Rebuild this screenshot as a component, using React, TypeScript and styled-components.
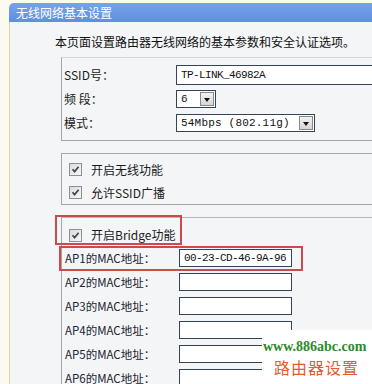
import styled, { createGlobalStyle } from 'styled-components';

const GlobalStyle = createGlobalStyle`
  html, body {
    margin: 0;
    padding: 0;
  }
  body {
    width: 372px;
    height: 384px;
    overflow: hidden;
    background: #fcfaee;
    font-family: "Noto Sans CJK SC", "Liberation Sans", sans-serif;
    font-size: 12px;
    color: #1b1b1b;
  }
`;

const ssidRows = [
  { label: 'SSID号：', kind: 'input', value: 'TP-LINK_46982A' },
  { label: '频 段：', kind: 'select', value: '6', width: 40 },
  { label: '模式：', kind: 'select', value: '54Mbps (802.11g)', width: 139 },
];

const apRows = [
  { label: 'AP1的MAC地址：', value: '00-23-CD-46-9A-96' },
  { label: 'AP2的MAC地址：', value: '' },
  { label: 'AP3的MAC地址：', value: '' },
  { label: 'AP4的MAC地址：', value: '' },
  { label: 'AP5的MAC地址：', value: '' },
  { label: 'AP6的MAC地址：', value: '' },
];

const Check = () => (
  <CheckBox>
    <svg width="11" height="11" viewBox="0 0 11 11">
      <path d="M2.5 5.2 L4.6 7.6 L8.6 2.8" fill="none" stroke="#3b4660" strokeWidth="1.7" />
    </svg>
  </CheckBox>
);

export default function App() {
  return (
    <Page>
      <GlobalStyle />
      <Header>无线网络基本设置</Header>
      <Body>
        <Intro>本页面设置路由器无线网络的基本参数和安全认证选项。</Intro>
        <Sections>
          <FormBox>
            {ssidRows.map((r) => (
              <FormRow key={r.label}>
                <Label>{r.label}</Label>
                {r.kind === 'input' ? (
                  <TextInput $width={220} $height={20}>{r.value}</TextInput>
                ) : (
                  <SelectBox $width={r.width || 40}>
                    <SelectText>{r.value}</SelectText>
                    <DropButton />
                  </SelectBox>
                )}
              </FormRow>
            ))}
          </FormBox>

          <CheckGroup>
            <CheckRow>
              <Check />
              <span>开启无线功能</span>
            </CheckRow>
            <CheckRow>
              <Check />
              <span>允许SSID广播</span>
            </CheckRow>
          </CheckGroup>

          <BridgeBox>
            <BridgeRow>
              <Check />
              <span>开启Bridge功能</span>
            </BridgeRow>
            {apRows.map((r) => (
              <ApRow key={r.label}>
                <ApLabel>{r.label}</ApLabel>
                <TextInput $width={113} $height={18}>{r.value}</TextInput>
              </ApRow>
            ))}
            <Mark $left={-7} $top={-3} $w={127} $h={30} />
            <Mark $left={-3} $top={28} $w={244} $h={25} />
          </BridgeBox>
        </Sections>
      </Body>
      <Stamp>
        <StampUrl>www.886abc.com</StampUrl>
        <StampName>路由器设置</StampName>
      </Stamp>
    </Page>
  );
}

const Page = styled.div`
  position: relative;
  box-sizing: border-box;
  height: 384px;
  padding: 3px 0 0 9px;
  display: flex;
  flex-direction: column;
  overflow: hidden;
`;

const Header = styled.div`
  height: 19px;
  line-height: 19px;
  padding-left: 7px;
  color: #ffffff;
  font-size: 12px;
  background: linear-gradient(#77a2ea, #5f8fe2);
  border-top-left-radius: 5px;
`;

const Body = styled.div`
  flex: 1;
  display: flex;
  flex-direction: column;
  background: #f3f5f7;
  border-left: 1px solid #ddd3ac;
`;

const Intro = styled.div`
  padding: 12px 0 0 45px;
  line-height: 16px;
  height: 16px;
  white-space: nowrap;
  color: #111;
`;

const Sections = styled.div`
  flex: 1;
  display: flex;
  flex-direction: column;
  gap: 12px;
  padding: 7px 0 0 51px;
`;

const FormBox = styled.div`
  border-top: 1px solid #d6d6d6;
  border-left: 1px solid #a6a6a6;
  border-bottom: 1px solid #a6a6a6;
  padding: 5px 0 5px 2px;
`;

const FormRow = styled.div`
  display: grid;
  grid-template-columns: 112px 1fr;
  align-items: center;
  height: 24px;
  white-space: nowrap;
`;

const Label = styled.span`
  line-height: 16px;
`;

const TextInput = styled.div<{ $width: number; $height: number }>`
  box-sizing: border-box;
  width: ${(p) => p.$width}px;
  height: ${(p) => p.$height}px;
  padding-left: 4px;
  border: 1px solid #33445a;
  background: #ffffff;
  font-family: "Liberation Mono", monospace;
  font-size: 11px;
  letter-spacing: -0.6px;
  line-height: ${(p) => p.$height - 2}px;
  color: #111;
  white-space: nowrap;
`;

const SelectBox = styled.div<{ $width: number }>`
  box-sizing: border-box;
  display: flex;
  align-items: center;
  width: ${(p) => p.$width}px;
  height: 18px;
  border: 1px solid #33445a;
  background: #ffffff;
`;

const SelectText = styled.span`
  flex: 1;
  padding-left: 4px;
  font-family: "Liberation Mono", monospace;
  font-size: 11px;
  letter-spacing: 0.2px;
  white-space: nowrap;
  color: #111;
`;

const DropButton = styled.span`
  box-sizing: border-box;
  width: 14px;
  height: 14px;
  margin-right: 1px;
  display: flex;
  align-items: center;
  justify-content: center;
  background: linear-gradient(#f2f2f2, #d6d6d6);
  border: 1px solid #8a8a8a;

  &::after {
    content: '';
    border-left: 3.5px solid transparent;
    border-right: 3.5px solid transparent;
    border-top: 4px solid #111;
    margin-top: 1px;
  }
`;

const CheckGroup = styled.div`
  border-top: 1px solid #a6a6a6;
  border-left: 1px solid #a6a6a6;
  border-bottom: 1px solid #a6a6a6;
  padding: 4px 0 0 7px;
`;

const CheckRow = styled.div`
  display: flex;
  align-items: center;
  gap: 9px;
  height: 23px;
  line-height: 16px;
`;

const CheckBox = styled.span`
  box-sizing: border-box;
  width: 13px;
  height: 13px;
  display: flex;
  align-items: center;
  justify-content: center;
  border: 1px solid #8d8f92;
  background: linear-gradient(135deg, #dcdcd8, #f7f7f5);
`;

const BridgeBox = styled.div`
  position: relative;
  flex: 1;
  border-top: 1px solid #b6b6b6;
  border-left: 1px solid #a6a6a6;
  padding: 6px 0 0 2px;
`;

const BridgeRow = styled(CheckRow)`
  height: 22px;
  padding-left: 5px;
`;

const ApRow = styled.div`
  display: grid;
  grid-template-columns: 114px 113px;
  align-items: center;
  height: 24px;
  padding-left: 1px;
  white-space: nowrap;
`;

const ApLabel = styled.span`
  line-height: 16px;
  font-size: 11.5px;
  color: #1b2330;
`;

const Mark = styled.div<{ $left: number; $top: number; $w: number; $h: number }>`
  position: absolute;
  box-sizing: border-box;
  left: ${(p) => p.$left}px;
  top: ${(p) => p.$top}px;
  width: ${(p) => p.$w}px;
  height: ${(p) => p.$h}px;
  border: 2px solid #cc4a4a;
  pointer-events: none;
`;

const Stamp = styled.div`
  position: absolute;
  left: 262px;
  top: 330px;
  right: 0;
  bottom: 0;
  display: flex;
  flex-direction: column;
  padding: 8px 0 0 1px;
  background: #ffffff;
`;

const StampUrl = styled.div`
  font-family: "Liberation Serif", serif;
  font-weight: bold;
  font-size: 14px;
  line-height: 18px;
  color: #2e8a2a;
  white-space: nowrap;
`;

const StampName = styled.div`
  margin-left: 11px;
  font-size: 16px;
  line-height: 22px;
  letter-spacing: 1px;
  color: #e55a2e;
  white-space: nowrap;
`;
